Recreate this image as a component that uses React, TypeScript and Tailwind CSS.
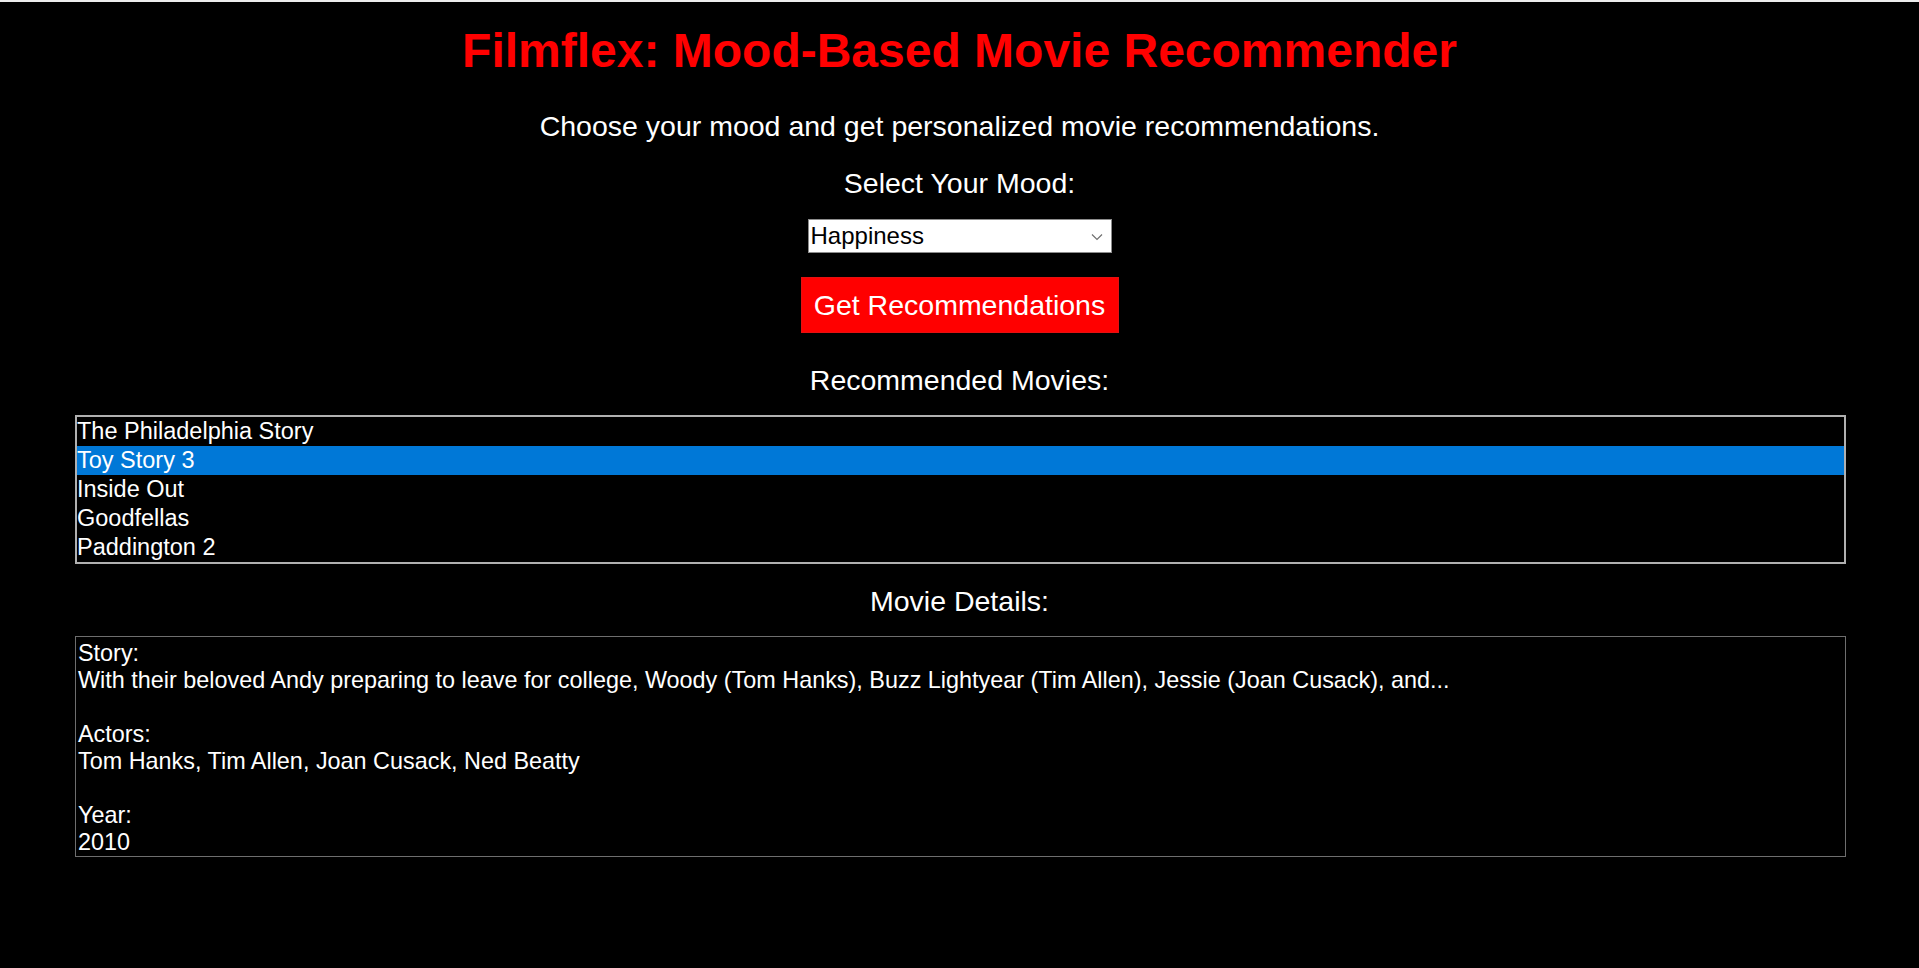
import React from "react";

const font = { fontFamily: '"Liberation Sans", Arial, sans-serif' };

export default function App() {
  const movies = [
    "The Philadelphia Story",
    "Toy Story 3",
    "Inside Out",
    "Goodfellas",
    "Paddington 2",
  ];
  return (
    <div
      className="min-h-[968px] w-full bg-black flex flex-col font-['Liberation_Sans',Arial,sans-serif]"
      style={font}
    >
      <div className="h-[2px] w-full bg-[#ececec]" />
      <div className="flex flex-col items-center">
        <h1 className="mt-[21px] text-[48px] leading-[55px] font-bold text-[#ff0000]">
          Filmflex: Mood-Based Movie Recommender
        </h1>
        <p className="mt-[32px] text-[28.5px] leading-[32px] text-white">
          Choose your mood and get personalized movie recommendations.
        </p>
        <p className="mt-[25px] text-[28.5px] leading-[32px] text-white">
          Select Your Mood:
        </p>
        <div className="mt-[20px] w-[304px] h-[34px] bg-white border border-[#8c8c8c] flex items-center justify-between pl-[2px] pr-[8px]">
          <span className="text-[24px] leading-[32px] text-black">Happiness</span>
          <svg width="12" height="8" viewBox="0 0 12 8" className="mt-[1px]">
            <path d="M1 1.5 L6 6.5 L11 1.5" fill="none" stroke="#707070" strokeWidth="1.2" />
          </svg>
        </div>
        <button className="mt-[24px] w-[318px] h-[56px] bg-[#ff0000] border border-[#e41010] text-white text-[28.5px] leading-[32px] flex items-center justify-center">
          Get Recommendations
        </button>
        <p className="mt-[31px] text-[28.5px] leading-[32px] text-white">
          Recommended Movies:
        </p>
      </div>
      <div className="mt-[19px] ml-[75px] w-[1771px] border-2 border-[#b0b0b0] flex flex-col">
        {movies.map((m, i) => (
          <div
            key={m}
            className={
              i === 1
                ? "h-[29px] leading-[29px] text-[23.5px] text-white bg-[#0078d7]"
                : "h-[29px] leading-[29px] text-[23.5px] text-white"
            }
          >
            {m}
          </div>
        ))}
      </div>
      <div className="flex flex-col items-center">
        <p className="mt-[21px] text-[28.5px] leading-[32px] text-white">Movie Details:</p>
      </div>
      <div className="mt-[19px] ml-[75px] w-[1771px] h-[221px] border border-[#6e6e6e] pt-[3px] pl-[2px] text-white text-[23.4px] leading-[27px]">
        <div>Story:</div>
        <div>
          With their beloved Andy preparing to leave for college, Woody (Tom Hanks), Buzz
          Lightyear (Tim Allen), Jessie (Joan Cusack), and...
        </div>
        <div className="h-[27px]" />
        <div>Actors:</div>
        <div>Tom Hanks, Tim Allen, Joan Cusack, Ned Beatty</div>
        <div className="h-[27px]" />
        <div>Year:</div>
        <div>2010</div>
      </div>
    </div>
  );
}
